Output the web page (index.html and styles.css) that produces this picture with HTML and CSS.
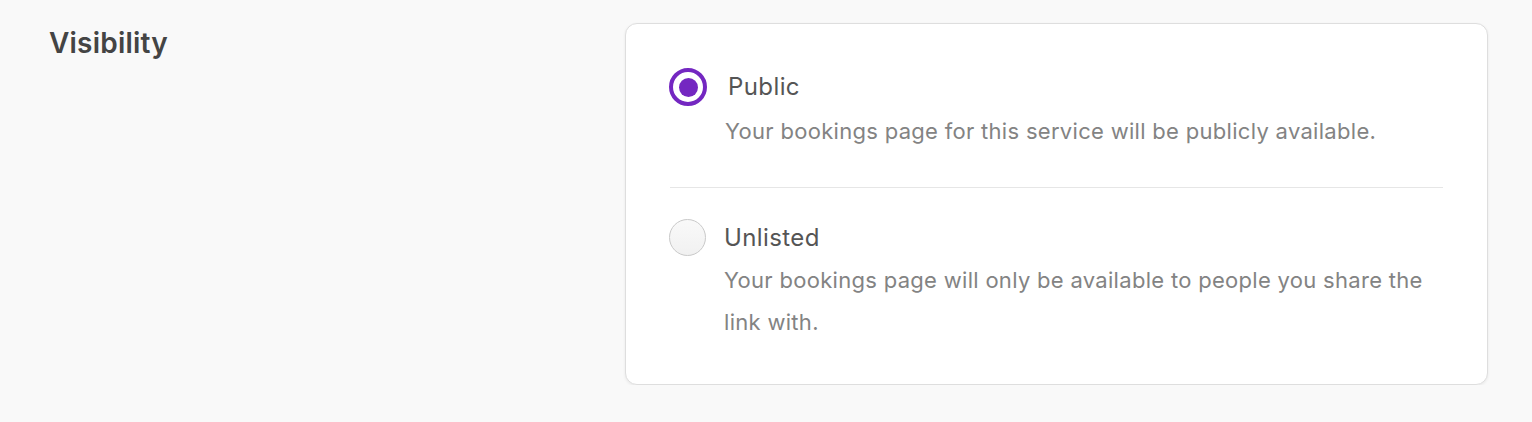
FILE: index.html
```html
<!DOCTYPE html>
<html lang="en">
<head>
<meta charset="utf-8">
<title>Visibility</title>
<link rel="stylesheet" href="styles.css">
</head>
<body>
<section class="setting">
  <h2 class="setting-label">Visibility</h2>
  <div class="card">
    <label class="option">
      <span class="radio radio-checked"><span class="radio-dot"></span></span>
      <span class="option-text">
        <span class="option-title option-title-public">Public</span>
        <span class="option-desc">Your bookings page for this service will be publicly available.</span>
      </span>
    </label>
    <hr class="divider">
    <label class="option">
      <span class="radio radio-empty"></span>
      <span class="option-text">
        <span class="option-title">Unlisted</span>
        <span class="option-desc option-desc-tight">Your bookings page will only be available to people you share the link with.</span>
      </span>
    </label>
  </div>
</section>
</body>
</html>
```
FILE: styles.css
```css
html, body {
  margin: 0;
  padding: 0;
  background: #f9f9f9;
  font-family: "Inter", "Open Sans", "Liberation Sans", sans-serif;
}

.setting {
  display: flex;
  align-items: flex-start;
  padding: 23px 44px 0 49px;
}

.setting-label {
  margin: 6px 0 0 0;
  width: 576px;
  flex: none;
  font-size: 28px;
  font-weight: 600;
  letter-spacing: 0.2px;
  color: #444444;
  line-height: 28px;
}

.card {
  width: 864px;
  box-sizing: border-box;
  background: #ffffff;
  border: 1px solid #dedede;
  border-radius: 12px;
  box-shadow: 0 1px 3px rgba(0, 0, 0, 0.07);
  padding: 44px 44px 41px 43px;
}

.option {
  display: flex;
  align-items: flex-start;
  gap: 18px;
}

.radio {
  flex: none;
  width: 38px;
  height: 38px;
  box-sizing: border-box;
  border-radius: 50%;
  display: flex;
  align-items: center;
  justify-content: center;
}

.radio-checked {
  border: 4px solid #7427c1;
  background: #ffffff;
}

.radio-dot {
  width: 19px;
  height: 19px;
  border-radius: 50%;
  background: #7427c1;
}

.radio-empty {
  width: 37px;
  height: 37px;
  border: 1px solid #c9c9c9;
  background: linear-gradient(#f9f9f9, #f1f1f1);
}

.option-text {
  display: flex;
  flex-direction: column;
}

.option-title {
  font-size: 24px;
  letter-spacing: 0.4px;
  line-height: 38px;
  color: #555555;
}

.option-title-public {
  padding-left: 3px;
}

.option-desc {
  margin-top: 4px;
  font-size: 22px;
  letter-spacing: 0.3px;
  line-height: 42px;
  color: #838383;
}

.option-desc-tight {
  margin-top: 2px;
}

.divider {
  border: 0;
  border-top: 1px solid #e6e6e6;
  margin: 35px 0 31px 1px;
}
```
